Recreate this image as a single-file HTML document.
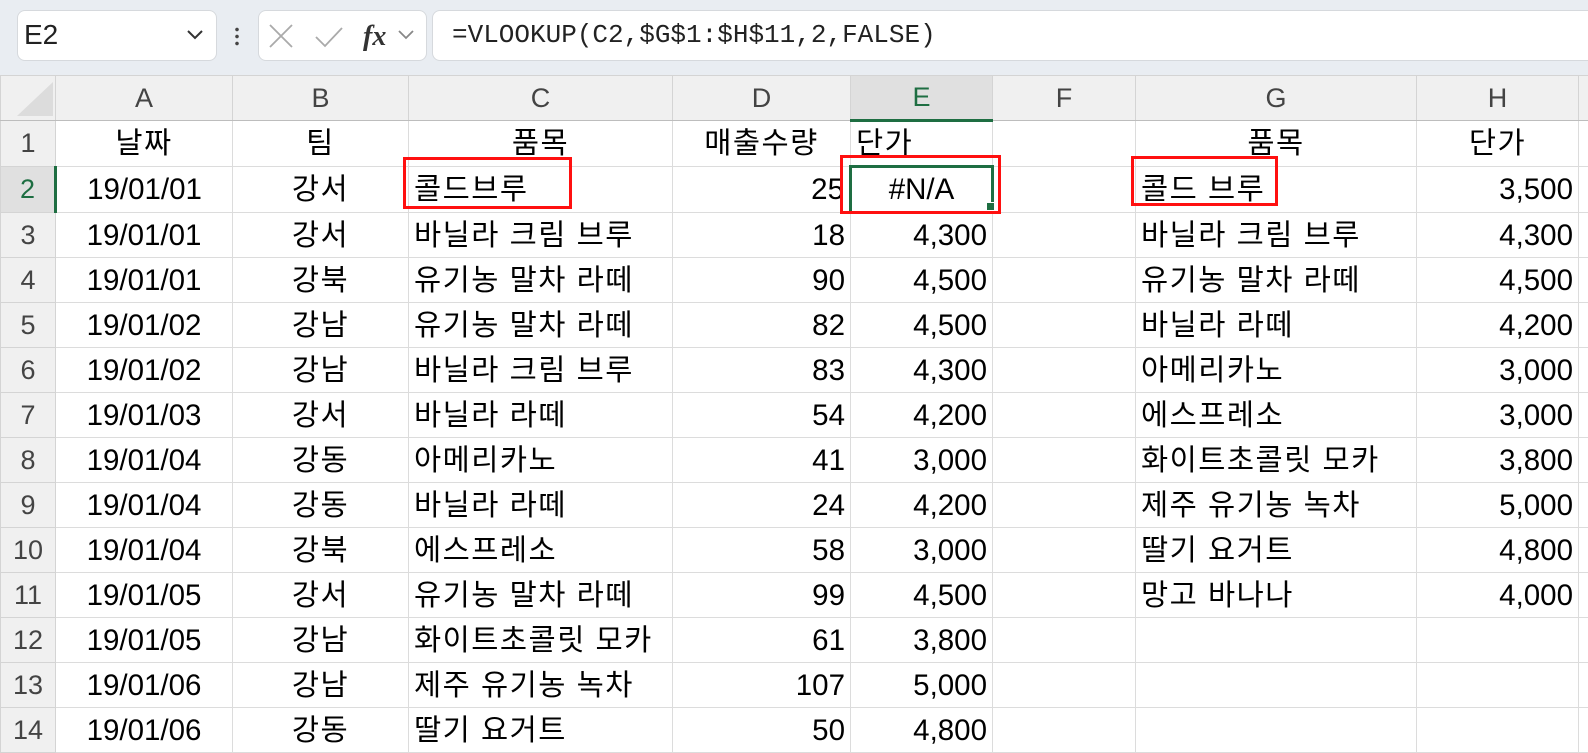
<!DOCTYPE html>
<html><head><meta charset="utf-8"><style>
*{margin:0;padding:0;box-sizing:border-box}
body{width:1588px;height:718px;overflow:hidden;background:#fff;font-family:"Liberation Sans","Noto Sans CJK KR",sans-serif;position:relative}
.top{position:absolute;left:0;top:0;width:1588px;height:75px;background:#e9edf2}
.box{position:absolute;background:#fff;border:1px solid #d6d9dd;border-radius:8px}
table{position:absolute;left:0;top:75px;border-collapse:collapse;table-layout:fixed;width:1598px}
td{border:1px solid #dcdcdc;height:45px;font-size:29.5px;color:#000;white-space:nowrap;overflow:hidden;padding:0 5px;line-height:43px}
td.k{letter-spacing:1.5px}
tr.h td{height:44px;background:#f0f0f0;color:#444;text-align:center;border-color:#d4d4d4;border-bottom:1px solid #bdbdbd;font-size:27px}
td.n{background:#f0f0f0;color:#444;text-align:center;border-right:1px solid #bdbdbd;border-color:#d4d4d4;padding:0;font-size:27px}
td.c{text-align:center}td.r{text-align:right}
.red{position:absolute;border:3px solid #ff1010}
</style></head><body>
<div class="top"></div>
<div class="box" style="left:17px;top:10px;width:200px;height:51px"></div>
<div style="position:absolute;left:24px;top:19px;font-size:28px;color:#222">E2</div>
<svg style="position:absolute;left:186px;top:29px" width="18" height="12"><path d="M2 2 L9 9 L16 2" stroke="#333" stroke-width="2" fill="none"/></svg>
<div style="position:absolute;left:235px;top:26px;width:4px;height:20px;background:radial-gradient(circle,#444 1.6px,transparent 2px) 0 0/4px 7px"></div>
<div class="box" style="left:258px;top:10px;width:169px;height:51px"></div>
<svg style="position:absolute;left:268px;top:22px" width="160" height="30"><path d="M2 3 L24 25 M24 3 L2 25" stroke="#aaa" stroke-width="1.8"/><path d="M48 15 L57 24 L74 6" stroke="#aaa" stroke-width="1.8" fill="none"/><text x="95" y="23" font-family="Liberation Serif,serif" font-style="italic" font-weight="bold" font-size="28" fill="#333">fx</text><path d="M131 9 L138 16 L145 9" stroke="#888" stroke-width="1.8" fill="none"/></svg>
<div class="box" style="left:432px;top:10px;width:1170px;height:51px"></div>
<div style="position:absolute;left:452px;top:20px;font-family:'Liberation Mono',monospace;font-size:26px;letter-spacing:0;color:#222">=VLOOKUP(C2,$G$1:$H$11,2,FALSE)</div>
<table>
<colgroup><col style="width:55px"><col style="width:177px"><col style="width:176px"><col style="width:264px"><col style="width:178px"><col style="width:142px"><col style="width:143px"><col style="width:281px"><col style="width:162px"><col style="width:20px"></colgroup>
<tr class="h"><td style="background:#f0f0f0;position:relative"><svg style="position:absolute;left:16px;top:6px" width="36" height="34"><path d="M36 0 L36 34 L0 34 Z" fill="#dcdcdc"/></svg></td><td>A</td><td>B</td><td>C</td><td>D</td><td style="background:#e0e0e0;color:#1e6e42;border-bottom:3px solid #1e6e42">E</td><td>F</td><td>G</td><td>H</td><td></td></tr>
<tr><td class="n">1</td><td class="c k">날짜</td><td class="c k">팀</td><td class="c k">품목</td><td class="c k">매출수량</td><td class="k">단가</td><td></td><td class="c k">품목</td><td class="c k">단가</td><td></td></tr>
<tr><td class="n" style="color:#1e6e42;background:#e0e0e0;border-right:3px solid #1e6e42">2</td><td class="c">19/01/01</td><td class="c k">강서</td><td class="k">콜드브루</td><td class="r">25</td><td class="c" style="border:3px solid #1e6e42">#N/A</td><td></td><td class="k">콜드 브루</td><td class="r">3,500</td><td></td></tr>
<tr><td class="n">3</td><td class="c">19/01/01</td><td class="c k">강서</td><td class="k">바닐라 크림 브루</td><td class="r">18</td><td class="r">4,300</td><td></td><td class="k">바닐라 크림 브루</td><td class="r">4,300</td><td></td></tr>
<tr><td class="n">4</td><td class="c">19/01/01</td><td class="c k">강북</td><td class="k">유기농 말차 라떼</td><td class="r">90</td><td class="r">4,500</td><td></td><td class="k">유기농 말차 라떼</td><td class="r">4,500</td><td></td></tr>
<tr><td class="n">5</td><td class="c">19/01/02</td><td class="c k">강남</td><td class="k">유기농 말차 라떼</td><td class="r">82</td><td class="r">4,500</td><td></td><td class="k">바닐라 라떼</td><td class="r">4,200</td><td></td></tr>
<tr><td class="n">6</td><td class="c">19/01/02</td><td class="c k">강남</td><td class="k">바닐라 크림 브루</td><td class="r">83</td><td class="r">4,300</td><td></td><td class="k">아메리카노</td><td class="r">3,000</td><td></td></tr>
<tr><td class="n">7</td><td class="c">19/01/03</td><td class="c k">강서</td><td class="k">바닐라 라떼</td><td class="r">54</td><td class="r">4,200</td><td></td><td class="k">에스프레소</td><td class="r">3,000</td><td></td></tr>
<tr><td class="n">8</td><td class="c">19/01/04</td><td class="c k">강동</td><td class="k">아메리카노</td><td class="r">41</td><td class="r">3,000</td><td></td><td class="k">화이트초콜릿 모카</td><td class="r">3,800</td><td></td></tr>
<tr><td class="n">9</td><td class="c">19/01/04</td><td class="c k">강동</td><td class="k">바닐라 라떼</td><td class="r">24</td><td class="r">4,200</td><td></td><td class="k">제주 유기농 녹차</td><td class="r">5,000</td><td></td></tr>
<tr><td class="n">10</td><td class="c">19/01/04</td><td class="c k">강북</td><td class="k">에스프레소</td><td class="r">58</td><td class="r">3,000</td><td></td><td class="k">딸기 요거트</td><td class="r">4,800</td><td></td></tr>
<tr><td class="n">11</td><td class="c">19/01/05</td><td class="c k">강서</td><td class="k">유기농 말차 라떼</td><td class="r">99</td><td class="r">4,500</td><td></td><td class="k">망고 바나나</td><td class="r">4,000</td><td></td></tr>
<tr><td class="n">12</td><td class="c">19/01/05</td><td class="c k">강남</td><td class="k">화이트초콜릿 모카</td><td class="r">61</td><td class="r">3,800</td><td></td><td></td><td></td><td></td></tr>
<tr><td class="n">13</td><td class="c">19/01/06</td><td class="c k">강남</td><td class="k">제주 유기농 녹차</td><td class="r">107</td><td class="r">5,000</td><td></td><td></td><td></td><td></td></tr>
<tr><td class="n">14</td><td class="c">19/01/06</td><td class="c k">강동</td><td class="k">딸기 요거트</td><td class="r">50</td><td class="r">4,800</td><td></td><td></td><td></td><td></td></tr>
</table>
<div style="position:absolute;left:986px;top:202px;width:9px;height:9px;background:#1e6e42;border:1px solid #fff"></div>
<div class="red" style="left:403px;top:157px;width:169px;height:52px"></div>
<div class="red" style="left:840px;top:155px;width:161px;height:59px"></div>
<div class="red" style="left:1131px;top:156px;width:147px;height:50px"></div>
</body></html>
